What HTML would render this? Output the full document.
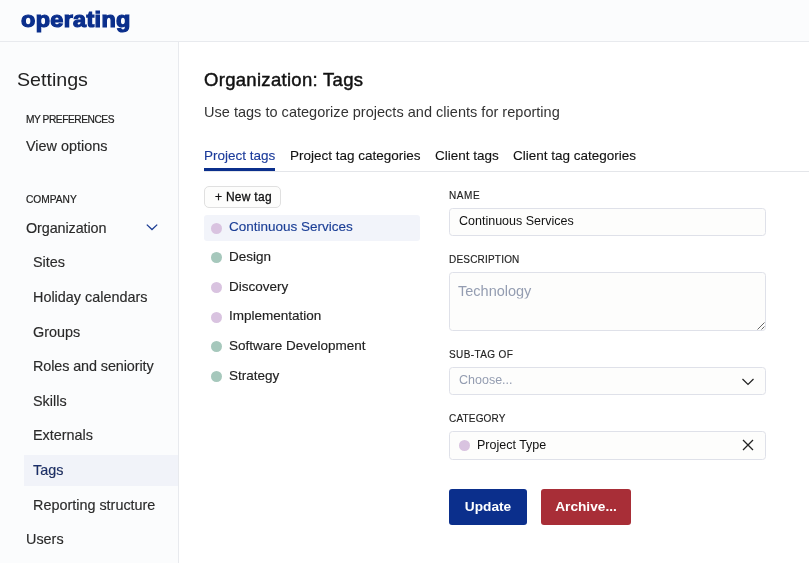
<!DOCTYPE html>
<html><head><meta charset="utf-8">
<style>
*{box-sizing:border-box;margin:0;padding:0}
html,body{width:809px;height:563px;overflow:hidden;background:#fff}
body{font-family:"Liberation Sans",sans-serif;color:#222;position:relative;font-size:14px}
.abs{position:absolute;white-space:nowrap;line-height:1;will-change:transform}
#hdr{position:absolute;left:0;top:0;width:809px;height:42px;background:#fbfcfd;border-bottom:1px solid #e8eaee}
#logo{left:21.2px;top:9px;font-size:21.6px;font-weight:bold;color:#0b2f8c;letter-spacing:0.3px;-webkit-text-stroke:1.2px #0b2f8c;transform-origin:0 0;transform:translateY(0.3px) scaleX(1.085)}
#side{position:absolute;left:0;top:42px;width:179px;height:521px;background:#fbfcfd;border-right:1px solid #e8eaee}
.nav{font-size:14.4px;color:#2a2a2a;-webkit-text-stroke:0.15px #2a2a2a}
.cap{font-size:10.2px;color:#222;letter-spacing:-0.45px;-webkit-text-stroke:0.2px #222}
#sel{position:absolute;left:24px;top:455px;width:154px;height:31px;background:#f1f3f9}
.tab{font-size:13.5px;color:#111;-webkit-text-stroke:0.12px currentColor}
.tag{font-size:13.5px;color:#222;-webkit-text-stroke:0.15px currentColor}
.dot{position:absolute;width:11px;height:11px;border-radius:50%}
.lbl{font-size:10px;color:#222;letter-spacing:0.6px;-webkit-text-stroke:0.15px #222;transform:translateY(0.5px)}
.inp{position:absolute;left:449px;width:317px;border:1px solid #dfe1e9;border-radius:3.5px;background:#fdfdfc}
.btn{will-change:transform;position:absolute;top:489px;height:36px;border-radius:3px;color:#fff;font-weight:bold;font-size:13.7px;text-align:center;line-height:35px}
</style></head><body>
<div id="hdr"></div>
<div id="logo" class="abs">operating</div>
<div id="side"></div>
<div id="sel"></div>
<div class="abs" style="left:16.8px;top:72px;font-size:17.7px;color:#222;transform-origin:0 0;transform:translateY(0.2px) scaleX(1.11)">Settings</div>
<div class="abs cap" style="left:26px;top:115px;letter-spacing:-0.45px">MY PREFERENCES</div>
<div class="abs nav" style="left:26px;top:139px">View options</div>
<div class="abs cap" style="left:26px;top:194.5px;letter-spacing:0">COMPANY</div>
<div class="abs nav" style="left:26px;top:221px;letter-spacing:-0.1px">Organization</div>
<svg class="abs" style="left:145.3px;top:222.4px" width="14" height="10" viewBox="0 0 14 10"><path d="M1.8 2.6 L7 7.5 L12.2 2.6" fill="none" stroke="#1c3d94" stroke-width="1.3"/></svg>
<div class="abs nav" style="left:33px;top:255px">Sites</div>
<div class="abs nav" style="left:33px;top:290px">Holiday calendars</div>
<div class="abs nav" style="left:33px;top:325px">Groups</div>
<div class="abs nav" style="left:33px;top:359px;letter-spacing:-0.1px">Roles and seniority</div>
<div class="abs nav" style="left:33px;top:394px">Skills</div>
<div class="abs nav" style="left:33px;top:428px">Externals</div>
<div class="abs nav" style="left:33px;top:463px;color:#1a2f6e">Tags</div>
<div class="abs nav" style="left:33px;top:498px">Reporting structure</div>
<div class="abs nav" style="left:26px;top:532px">Users</div>

<div class="abs" style="left:204px;top:71px;font-size:18.5px;color:#111;letter-spacing:0.3px;-webkit-text-stroke:0.45px #111">Organization: Tags</div>
<div class="abs" style="left:204px;top:105px;font-size:14.5px;color:#333;letter-spacing:0.02px">Use tags to categorize projects and clients for reporting</div>
<div class="abs tab" style="left:204px;top:149px;color:#1a3a9a">Project tags</div>
<div class="abs tab" style="left:290px;top:149px">Project tag categories</div>
<div class="abs tab" style="left:435px;top:149px">Client tags</div>
<div class="abs tab" style="left:513px;top:149px">Client tag categories</div>
<div style="position:absolute;left:204px;top:171px;width:605px;height:1px;background:#e4e6ea"></div>
<div style="position:absolute;left:204px;top:168px;width:71px;height:3px;background:#0b2f8c"></div>

<div style="position:absolute;left:204px;top:186px;width:77px;height:22px;border:1px solid #e0e0e0;border-radius:5px;background:#fdfdfc"></div>
<div class="abs" style="left:215px;top:190px;font-size:12px;color:#111;letter-spacing:0.28px;-webkit-text-stroke:0.3px #111;transform:translateY(0.5px)">+ New tag</div>

<div style="position:absolute;left:204px;top:215px;width:216px;height:26px;background:#f2f4fa;border-radius:3px"></div>
<div class="dot" style="left:211px;top:223px;background:#d9c3e0"></div>
<div class="abs tag" style="left:229px;top:220px;color:#1c3f96">Continuous Services</div>
<div class="dot" style="left:211px;top:252px;background:#a6c8bc"></div>
<div class="abs tag" style="left:229px;top:250px">Design</div>
<div class="dot" style="left:211px;top:282px;background:#d9c3e0"></div>
<div class="abs tag" style="left:229px;top:280px">Discovery</div>
<div class="dot" style="left:211px;top:311.5px;background:#d9c3e0"></div>
<div class="abs tag" style="left:229px;top:309px">Implementation</div>
<div class="dot" style="left:211px;top:341px;background:#a6c8bc"></div>
<div class="abs tag" style="left:229px;top:339px">Software Development</div>
<div class="dot" style="left:211px;top:371px;background:#a6c8bc"></div>
<div class="abs tag" style="left:229px;top:369px">Strategy</div>

<div class="abs lbl" style="left:448.5px;top:190px">NAME</div>
<div class="inp" style="top:208px;height:28px"></div>
<div class="abs" style="left:459px;top:215px;font-size:12.5px;color:#111">Continuous Services</div>
<div class="abs lbl" style="left:448.5px;top:254px;letter-spacing:0.2px">DESCRIPTION</div>
<div class="inp" style="top:272px;height:59px"></div>
<div class="abs" style="left:457.7px;top:283px;font-size:14.5px;color:#949db1;transform:translateY(0.5px)">Technology</div>
<svg class="abs" style="left:756.5px;top:321.5px" width="8" height="8" viewBox="0 0 8 8"><path d="M0.5 7.5 L7.5 0.5 M4.5 7.5 L7.5 4.5" stroke="#555" stroke-width="0.9" fill="none"/></svg>
<div class="abs lbl" style="left:448.5px;top:349px;letter-spacing:0.39px">SUB-TAG OF</div>
<div class="inp" style="top:367px;height:28px"></div>
<div class="abs" style="left:459px;top:374px;font-size:12.5px;color:#949db1">Choose...</div>
<svg class="abs" style="left:741px;top:377px" width="14" height="10" viewBox="0 0 14 10"><path d="M1.5 2 L7 7.5 L12.5 2" fill="none" stroke="#222" stroke-width="1.2"/></svg>
<div class="abs lbl" style="left:448.5px;top:413px;letter-spacing:0.18px">CATEGORY</div>
<div class="inp" style="top:431px;height:29px"></div>
<div class="dot" style="left:459px;top:440px;background:#d9c3e0"></div>
<div class="abs" style="left:477px;top:439px;font-size:12.5px;color:#111">Project Type</div>
<svg class="abs" style="left:742px;top:439px" width="12" height="12" viewBox="0 0 12 12"><path d="M1 1 L11 11 M11 1 L1 11" fill="none" stroke="#222" stroke-width="1.3"/></svg>
<div class="btn" style="left:449px;width:78px;background:#0b2f8c">Update</div>
<div class="btn" style="left:541px;width:90px;background:#a82e37">Archive...</div>
</body></html>
